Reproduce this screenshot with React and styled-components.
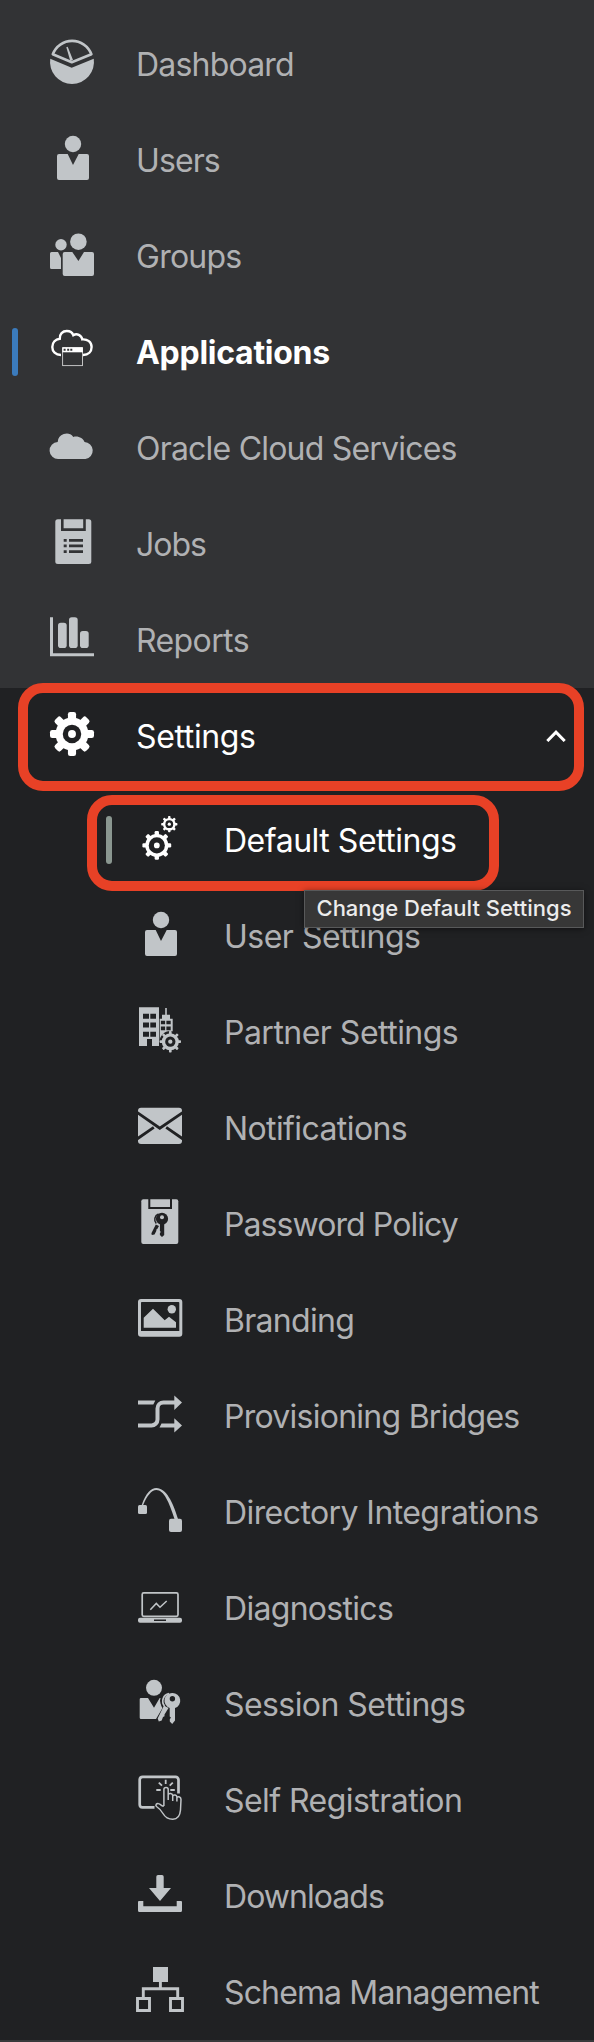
import React from "react";
import styled, { createGlobalStyle } from "styled-components";

const GlobalStyle = createGlobalStyle`
  *, *::before, *::after { box-sizing: border-box; }
  body { margin: 0; background: #202123; }
`;

const Sidebar = styled.nav`
  width: 100%;
  height: 2042px;
  overflow: hidden;
  background: #202123;
  border-bottom: 2px solid #38393b;
  font-family: Inter, "Liberation Sans", sans-serif;
  font-size: 32px;
  color: #b0b1b3;
`;

const MainList = styled.div`
  padding-top: 16px;
  background: #323335;
`;

const SubList = styled.div`
  padding: 8px 0 0 88px;
`;

const Row = styled.div`
  position: relative;
  display: flex;
  align-items: center;
  height: 96px;
  padding: 0 28px 0 50px;
  background: var(--back);
  color: ${(p) => (p.$active ? "#fff" : "inherit")};
  --icon: ${(p) => (p.$active ? "#fff" : "#c1c5c8")};
  --back: ${(p) => (p.$dark ? "#202123" : "#323335")};
`;

const Marker = styled.span`
  position: absolute;
  left: ${(p) => (p.$sub ? 18 : 12)}px;
  top: 24px;
  width: 6px;
  height: 48px;
  border-radius: 3px;
  background: ${(p) => (p.$sub ? "#8a9790" : "#3b7bbc")};
`;

const Icon = styled.svg`
  flex: none;
  width: 44px;
  height: 44px;
  margin: 0 42px 4px 0;
  overflow: visible;
  fill: var(--icon);
`;

const Label = styled.span`
  flex: 1;
  padding-top: 2px;
  white-space: nowrap;
  font-weight: ${(p) => (p.$bold ? 700 : 400)};
  letter-spacing: ${(p) => p.$tracking}px;
  line-height: 40px;
`;

const Chevron = styled.svg`
  flex: none;
  width: 20px;
  height: 12px;
  fill: none;
  stroke: #fff;
  stroke-width: 3;
`;

const Highlight = styled.span`
  position: absolute;
  z-index: 1;
  left: ${(p) => (p.$sub ? -1 : 18)}px;
  top: ${(p) => (p.$sub ? 3 : -5)}px;
  width: ${(p) => (p.$sub ? 412 : 566)}px;
  height: ${(p) => (p.$sub ? 96 : 108)}px;
  border: 10px solid #e84126;
  border-radius: 25px;
`;

const Tooltip = styled.span`
  position: absolute;
  z-index: 2;
  top: 98px;
  right: 10px;
  width: 280px;
  height: 38px;
  border: 1px solid #58595a;
  background: #373737;
  box-shadow: 0 1px 6px rgba(0, 0, 0, 0.5);
  color: #ececec;
  font-size: 22px;
  font-weight: 500;
  line-height: 34px;
  text-align: center;
  white-space: nowrap;
`;

function Gear({ cx, cy, r, body = 0.75, hole = 0.42, dot = 0.18, teeth = 8, tooth = 0.37 }) {
  const w = r * tooth;
  return (
    <g>
      {Array.from({ length: teeth / 2 }, (_, i) => (
        <rect
          key={i}
          x={cx - w / 2}
          y={cy - r}
          width={w}
          height={r * 2}
          rx={w * 0.28}
          transform={`rotate(${(i * 360) / teeth} ${cx} ${cy})`}
        />
      ))}
      <circle cx={cx} cy={cy} r={r * body} />
      <circle cx={cx} cy={cy} r={r * hole} fill="var(--back)" />
      <circle cx={cx} cy={cy} r={r * dot} />
    </g>
  );
}

const icons = {
  dashboard: (
    <>
      <path d="M0.25 18.7L21.7 27.7L43.75 18.7A22 22 0 1 1 0.25 18.7Z" />
      <path
        d="M2.8 14.3A20.6 20.6 0 0 1 41.4 14.3L21.8 22.2Z"
        fill="none"
        stroke="var(--icon)"
        strokeWidth="2.6"
        strokeLinejoin="round"
      />
      <path d="M16.3 7.2L17.7 6.8L23 20L20.3 21Z" />
    </>
  ),
  user: (
    <>
      <circle cx="23" cy="8" r="8.2" />
      <path d="M9 18H17.7L23 29L28.7 18H37a2 2 0 0 1 2 2V42a2 2 0 0 1-2 2H9a2 2 0 0 1-2-2V20a2 2 0 0 1 2-2Z" />
    </>
  ),
  groups: (
    <>
      <circle cx="28.4" cy="9.7" r="8.3" />
      <path d="M14.7 20H22.3L28.4 29L34 20H42a2 2 0 0 1 2 2V42a2 2 0 0 1-2 2H14.7a2 2 0 0 1-2-2V22a2 2 0 0 1 2-2Z" />
      <circle cx="11" cy="12.7" r="5.7" />
      <path d="M1.5 20H8L11 26V37H1.5A1.5 1.5 0 0 1 0 35.5V21.5A1.5 1.5 0 0 1 1.5 20Z" />
    </>
  ),
  applications: (
    <>
      <path
        d="M11 27C5.5 27 2.3 23.5 2.3 19C2.3 14.5 5.5 11.2 9.8 10.7C9.5 6 12.5 3 16.8 3C20 3 22.4 4.6 23.3 7.2C26.8 4.9 31.5 7 32.3 11.4C37.5 11 41.6 14 41.6 19C41.6 23.5 38.5 27 33 27"
        fill="none"
        stroke="var(--icon)"
        strokeWidth="2.4"
      />
      <rect x="12.7" y="19.7" width="19.8" height="18" fill="none" stroke="var(--icon)" strokeWidth="0.7" />
      <rect x="12.3" y="19.3" width="20.6" height="5" />
      <path d="M13.6 20.8h2v2h-2zM17.2 20.8h2v2h-2zM20.3 20.8h2v2h-2z" fill="var(--back)" />
    </>
  ),
  cloud: (
    <path d="M8.5 35A8.5 8.5 0 0 1 7.7 18A8.8 8.8 0 0 1 23.3 12.9C28 11.6 33.2 14 34.5 18.1A8.5 8.5 0 0 1 35.5 35Z" />
  ),
  jobs: (
    <>
      <rect x="5.3" y="-0.8" width="36" height="44.8" rx="2.5" />
      <path d="M12.3 -1V9.6H34.5V-1" fill="none" stroke="var(--back)" strokeWidth="2.6" />
      <path
        d="M13.7 19h3v2.7h-3zM13.7 24.6h3v2.7h-3zM13.7 30.2h3v2.7h-3zM19 19h14v2.7h-14zM19 24.6h14v2.7h-14zM19 30.2h14v2.7h-14z"
        fill="var(--back)"
      />
    </>
  ),
  reports: (
    <>
      <path d="M0 1.3H3V37.3H44V40.2H0Z" />
      <rect x="8" y="6.7" width="8.7" height="25.3" rx="2.8" />
      <rect x="19" y="1.3" width="8.7" height="30.7" rx="2.8" />
      <rect x="30" y="15" width="8.7" height="17" rx="2.8" />
    </>
  ),
  settings: <Gear cx={22} cy={22} r={22} />,
  defaults: (
    <>
      <Gear cx={18.8} cy={29.4} r={14.4} hole={0.56} dot={0.2} body={0.8} tooth={0.3} />
      <Gear cx={31.3} cy={8.2} r={8.1} hole={0.48} dot={0.2} body={0.78} tooth={0.3} />
    </>
  ),
  partner: (
    <>
      <path d="M1 -0.8H21V38H14V31H9V38H1Z" />
      <path
        d="M5 5.7h6v5h-6zM12.3 5.7h5.7v5h-5.7zM5 14.6h6v5h-6zM12.3 14.6h5.7v5h-5.7zM5 23.7h6v5h-6zM12.3 23.7h5.7v5h-5.7z"
        fill="var(--back)"
      />
      <path d="M27.2 0h1.6V6.7H32V10.7H34.7V34H21.7V10.7H24V6.7H27.2Z" />
      <path
        d="M22.9 12.8h4.2v3.4h-4.2zM28.4 12.8h4.3v3.4h-4.3zM22.9 18.6h4.2v3.6h-4.2zM28.4 18.6h4.3v3.6h-4.3z"
        fill="var(--back)"
      />
      <circle cx="32.3" cy="33.8" r="10.8" fill="var(--back)" />
      <Gear cx={32.3} cy={33.7} r={10.7} hole={0.48} dot={0.2} body={0.8} tooth={0.25} />
    </>
  ),
  mail: (
    <>
      <rect x="0" y="3.7" width="44" height="36.3" rx="3" />
      <path
        d="M-1 8.4L21.8 24.2L45 8.4M-1 35L15.8 23.4M28.2 23.4L45 35"
        fill="none"
        stroke="var(--back)"
        strokeWidth="2.8"
      />
    </>
  ),
  password: (
    <>
      <rect x="3.3" y="-0.7" width="37" height="44.7" rx="2" />
      <path d="M11.3 -1V8H33V-1" fill="none" stroke="var(--back)" strokeWidth="2" />
      <g fill="var(--back)">
        <circle cx="24" cy="18.8" r="6.1" />
        <path d="M22 24H26.2V35L24 37L21.9 35V33L22.9 32L21.9 31Z" />
        <path d="M17.8 24.5L21 26L19.3 29L18.5 29.3L18.3 31L16.5 34.5L13.8 35L13.4 33.3Z" />
      </g>
      <path d="M20.5 13.9A6 6 0 0 0 18.3 23.5" fill="none" stroke="var(--back)" strokeWidth="1.5" />
      <circle cx="24" cy="17.2" r="2" />
    </>
  ),
  branding: (
    <>
      <path
        fillRule="evenodd"
        d="M3 3H41.3A3 3 0 0 1 44.3 6V37.7A3 3 0 0 1 41.3 40.7H3A3 3 0 0 1 0 37.7V6A3 3 0 0 1 3 3ZM3.8 6A0.8 0.8 0 0 0 3 6.8V35H41.3V6.8A0.8 0.8 0 0 0 40.5 6Z"
      />
      <circle cx="33.8" cy="13.3" r="4.2" />
      <path d="M5.7 21.7L15 12.7L26.7 24.3L31 20.7L38 26.3V31.7H5.7Z" />
    </>
  ),
  bridges: (
    <>
      <path
        d="M0 33.4H13.3A6 6 0 0 0 19.5 27.4V16.5A6 6 0 0 1 25.5 10.5H37"
        fill="none"
        stroke="var(--icon)"
        strokeWidth="4"
      />
      <path d="M0 8.5H17.3L15.3 12.5H0ZM23.5 31.4H37V35.4H21.5ZM36.3 3.5L44 10.5L36.3 18ZM36.3 26.3L44 33.4L36.3 40.5Z" />
    </>
  ),
  directory: (
    <>
      <rect x="0" y="17" width="9" height="9" rx="1.5" />
      <rect x="31" y="30.7" width="13" height="13.3" rx="2" />
      <path d="M3.7 17C8 5 13 0 18.3 0C28 0 35 14 40 31H36.5C31 14 26 2 18.3 2C13.5 2 9 8 5.2 17Z" />
    </>
  ),
  diagnostics: (
    <>
      <rect x="4.2" y="8.9" width="35.8" height="23.4" rx="1.5" fill="none" stroke="var(--icon)" strokeWidth="1.7" />
      <path d="M12.3 25.7L18.3 19.4L22 23.2L28.7 17" fill="none" stroke="var(--icon)" strokeWidth="1.5" />
      <rect x="0" y="33.8" width="44" height="5" rx="2" />
      <rect x="16" y="35.5" width="12" height="1.5" fill="var(--back)" />
    </>
  ),
  session: (
    <>
      <circle cx="16" cy="7.8" r="8" />
      <path d="M3 18H10L16 27.7L21.7 18H23.3V26L24.5 28L18 39H3A1.3 1.3 0 0 1 1.7 37.7V19.3A1.3 1.3 0 0 1 3 18Z" />
      <circle cx="31.5" cy="20.7" r="9.5" fill="var(--back)" />
      <path d="M31 13.7A7.6 7.6 0 0 0 26.5 26" fill="none" stroke="var(--icon)" strokeWidth="1.7" />
      <path d="M26 25.5L30.5 28L26.5 34.5V36.2L25 37L23.7 40.5L20.8 41.5L19.7 38.5Z" />
      <path
        fillRule="evenodd"
        d="M34.4 13A7.7 7.7 0 0 1 37 28V40.5L34.2 44L31.8 41.5V39L33 37.7L31.7 36.5V28A7.7 7.7 0 0 1 34.4 13ZM34.4 16A2.7 2.7 0 1 0 34.4 21.4A2.7 2.7 0 1 0 34.4 16Z"
      />
    </>
  ),
  registration: (
    <g fill="none" stroke="var(--icon)">
      <path
        d="M16.5 31.4H4.5A3 3 0 0 1 1.7 28.4V3.7A3 3 0 0 1 4.7 0.9H37.5A3 3 0 0 1 40.5 3.9V17.5"
        strokeWidth="2.7"
      />
      <path
        d="M27.7 3.7V8M20.8 6.6L24 9.7M34.8 6.6L31.7 9.7M18.3 14H22.7M32.3 14H36.8"
        strokeWidth="1.8"
      />
      <path
        d="M25.9 30V13.5C25.9 10.8 30.2 10.8 30.2 13.5V24M30.2 18.5C31 16.8 34.7 17.2 34.7 19.5V25M34.7 20C35.8 18.3 38.9 18.8 38.9 21V25.5M38.9 21.5C40.5 20 43 21 43 23.5L42.5 34C42 40 39.5 43.3 34.8 43.3C30 43.3 27 41 25 37.5C23.5 35 21.5 32.5 18.5 30.5C17 29 18.7 27 20.5 27.6C23 28.3 24 30.5 25.9 30"
        strokeWidth="1.5"
      />
    </g>
  ),
  downloads: (
    <>
      <path d="M20 3H24A1.7 1.7 0 0 1 25.7 4.7V16H33L22 29L11 16H18.3V4.7A1.7 1.7 0 0 1 20 3Z" />
      <path d="M1 29H5.3V34.2H38.7V29H43A1 1 0 0 1 44 30V38.5A1.5 1.5 0 0 1 42.5 40H1.5A1.5 1.5 0 0 1 0 38.5V30A1 1 0 0 1 1 29Z" />
    </>
  ),
  schema: (
    <>
      <rect x="15" y="-1" width="15" height="15" />
      <path
        d="M22.4 13V20.7M5.3 29V20.7H39.7V29M-0.5 30.5H11.5V42.5H-0.5ZM32.5 30.5H44.5V42.5H32.5Z"
        fill="none"
        stroke="var(--icon)"
        strokeWidth="2.9"
      />
    </>
  ),
};

const mainItems = [
  { icon: "dashboard", text: "Dashboard", tracking: -0.8 },
  { icon: "user", text: "Users", tracking: -0.9 },
  { icon: "groups", text: "Groups", tracking: -0.75 },
  { icon: "applications", text: "Applications", tracking: -0.27, current: true },
  { icon: "cloud", text: "Oracle Cloud Services", tracking: -0.79 },
  { icon: "jobs", text: "Jobs", tracking: -1 },
  { icon: "reports", text: "Reports", tracking: -0.6 },
];

const subItems = [
  { icon: "defaults", text: "Default Settings", tracking: -0.48, current: true },
  { icon: "user", text: "User Settings", tracking: -0.5 },
  { icon: "partner", text: "Partner Settings", tracking: -0.52 },
  { icon: "mail", text: "Notifications", tracking: -0.6 },
  { icon: "password", text: "Password Policy", tracking: -0.92 },
  { icon: "branding", text: "Branding", tracking: -0.7 },
  { icon: "bridges", text: "Provisioning Bridges", tracking: -0.74 },
  { icon: "directory", text: "Directory Integrations", tracking: -0.58 },
  { icon: "diagnostics", text: "Diagnostics", tracking: -0.7 },
  { icon: "session", text: "Session Settings", tracking: -0.57 },
  { icon: "registration", text: "Self Registration", tracking: -0.55 },
  { icon: "downloads", text: "Downloads", tracking: -0.95 },
  { icon: "schema", text: "Schema Management", tracking: -0.86 },
];

export default function App() {
  return (
    <Sidebar>
      <GlobalStyle />
      <MainList>
        {mainItems.map(({ icon, text, tracking, current }) => (
          <Row key={text} $active={current}>
            {current && <Marker />}
            <Icon viewBox="0 0 44 44">{icons[icon]}</Icon>
            <Label $bold={current} $tracking={tracking}>{text}</Label>
          </Row>
        ))}
        <Row $active $dark>
          <Icon viewBox="0 0 44 44">{icons.settings}</Icon>
          <Label $tracking={-0.36}>Settings</Label>
          <Chevron viewBox="0 0 20 12">
            <path d="M1.3 11L10 2.2L18.7 11" />
          </Chevron>
          <Highlight />
        </Row>
      </MainList>
      <SubList>
        {subItems.map(({ icon, text, tracking, current }) => (
          <Row key={text} $dark $active={current}>
            {current && <Marker $sub />}
            <Icon viewBox="0 0 44 44">{icons[icon]}</Icon>
            <Label $tracking={tracking}>{text}</Label>
            {current && <Highlight $sub />}
            {current && <Tooltip role="tooltip">Change Default Settings</Tooltip>}
          </Row>
        ))}
      </SubList>
    </Sidebar>
  );
}
